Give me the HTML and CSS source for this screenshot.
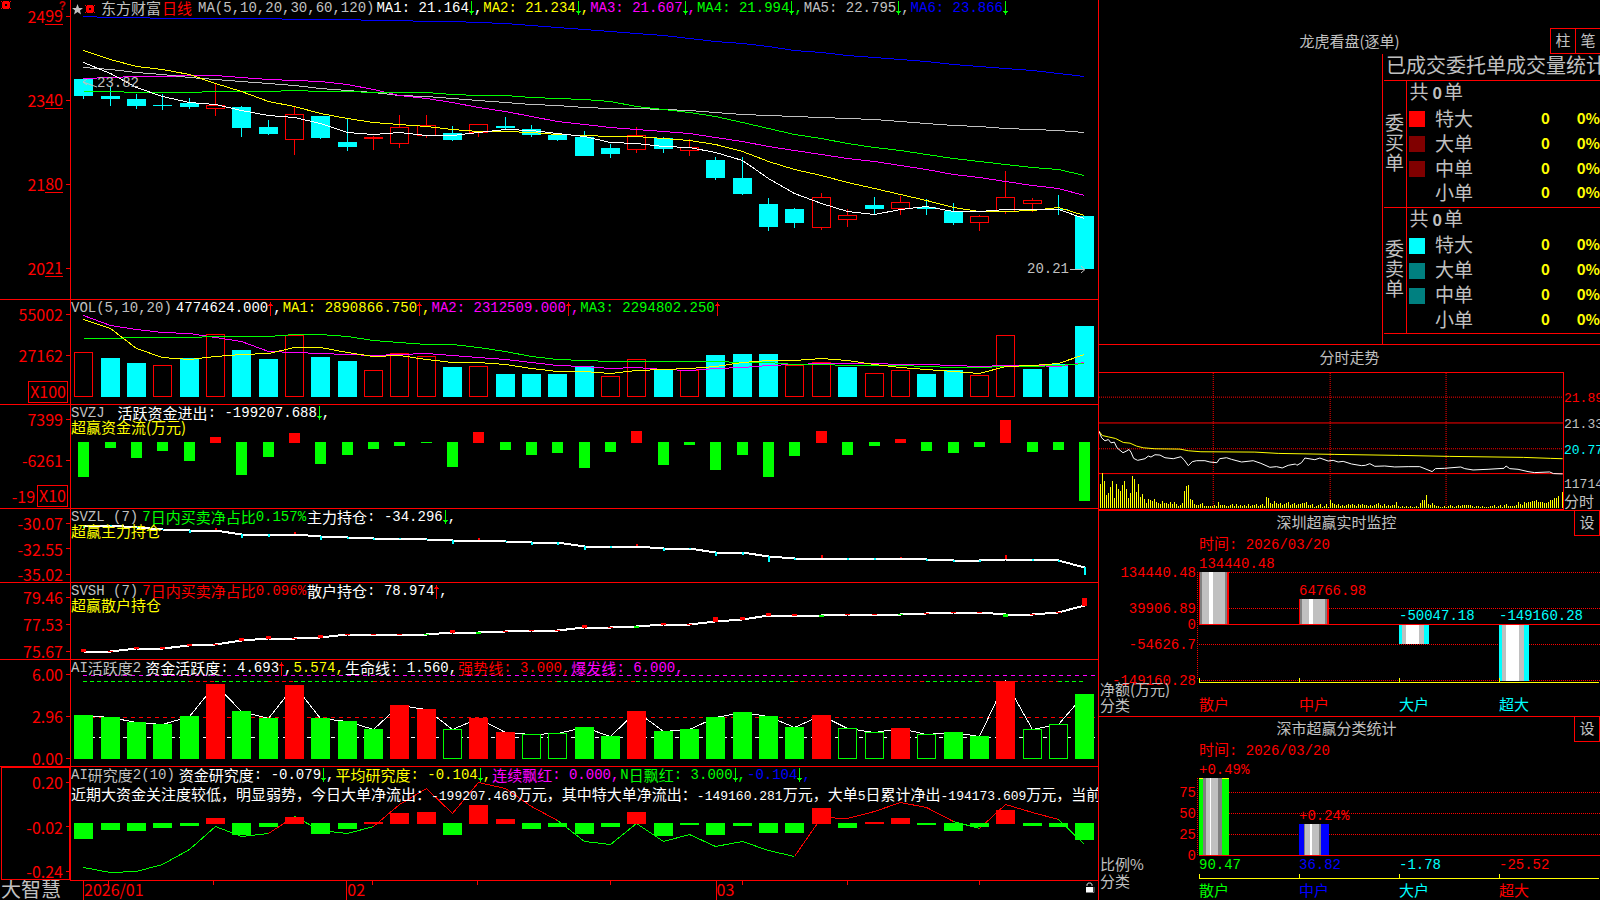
FILE: index.html
```html
<!DOCTYPE html>
<html lang="zh-CN">
<head>
<meta charset="utf-8">
<title>大智慧 - 东方财富</title>
<link rel="stylesheet" href="styles.css">
</head>
<body>
<svg class="defs" aria-hidden="true">
  <symbol id="down" viewBox="0 0 5 15"><path d="M2 0h1v14h-1zM0 10h5v1h-1v1h-1v2h-1v-2h-1v-1h-1z" fill="#0f0"/></symbol>
  <symbol id="up" viewBox="0 0 5 15"><path d="M2 1h1v14h-1zM2 1h1v2h1v1h1v1h-5v-1h1v-1h1z" fill="#f00"/></symbol>
  <symbol id="gear" viewBox="0 0 10 10"><path d="M2 1h6v1h1v6h-1v1h-6v-1h-1v-6h1zM4 4v2h2v-2zM0 1h1v1h-1zM9 1h1v1h-1zM0 8h1v1h-1zM9 8h1v1h-1z" fill="#f00" fill-rule="evenodd" shape-rendering="crispEdges"/></symbol>
</svg>
<main class="terminal">
<section class="left">

  <article class="panel">
    <div class="axis axis-main">
      <span>24<u>99</u></span><span>23<u>40</u></span><span>21<u>80</u></span><span>20<u>21</u></span>
      <div class="tools"><svg width="10" height="10"><use href="#gear"/></svg><em>?</em></div>
    </div>
    <div class="plot">
      <svg class="chart" id="kline" viewBox="71 0 1027 299" preserveAspectRatio="none"></svg>
      <header class="legend legend-main">
        <svg width="11" height="12" viewBox="0 0 11 12"><path d="M5.500 1l1.500 4h4l-3 2.500 1 4-3.500-2.500-3.500 2.500 1-4-3-2.500h4z" fill="silver"/></svg>
        <svg width="10" height="10"><use href="#gear"/></svg>
        <h1 class="c">东方财富</h1><span class="c red">日线</span>
        <span class="silver ma">MA(5,10,20,30,60,120)</span>
        <span class="white">MA1: 21.164<svg class="ar"><use href="#down"/></svg>,</span>
        <span class="yellow">MA2: 21.234<svg class="ar"><use href="#down"/></svg>,</span>
        <span class="magenta">MA3: 21.607<svg class="ar"><use href="#down"/></svg>,</span>
        <span class="green">MA4: 21.994<svg class="ar"><use href="#down"/></svg>,</span>
        <span class="silver">MA5: 22.795<svg class="ar"><use href="#down"/></svg>,</span>
        <span class="blue">MA6: 23.866<svg class="ar"><use href="#down"/></svg></span>
      </header>
      <span class="callout high"><svg width="14" height="10" viewBox="0 0 14 10"><path d="M4 0L0 3l4 3M0 3l14 5" fill="none" stroke="silver"/></svg>23.82</span>
      <span class="callout low">20.21<svg width="16" height="9" viewBox="0 0 16 9"><path d="M0 4.500h14M11 1l4 3.500-4 3.500" fill="none" stroke="silver"/></svg></span>
    </div>
  </article>

  <article class="panel">
    <div class="axis axis-boxed"><span>55002</span><span>27162</span><div class="pair"><b>X100</b></div></div>
    <div class="plot">
      <svg class="chart" id="vol" viewBox="71 300 1027 104" preserveAspectRatio="none"></svg>
      <header class="legend">
        <h2>VOL(5,10,20)</h2>
        <span class="white">4774624.000<svg class="ar"><use href="#up"/></svg>,</span>
        <span class="yellow">MA1: 2890866.750<svg class="ar"><use href="#up"/></svg>,</span>
        <span class="magenta">MA2: 2312509.000<svg class="ar"><use href="#up"/></svg>,</span>
        <span class="green">MA3: 2294802.250<svg class="ar"><use href="#up"/></svg></span>
      </header>
    </div>
  </article>

  <article class="panel">
    <div class="axis axis-boxed"><span>7399</span><span>-6261</span><div class="pair"><i>-19</i><b>X10</b></div></div>
    <div class="plot">
      <svg class="chart" id="flow" viewBox="71 405 1027 103" preserveAspectRatio="none"></svg>
      <header class="legend">
        <h2 class="wide">SVZJ</h2>
        <span class="white"><span class="c">活跃资金进出</span>: -199207.688<svg class="ar"><use href="#down"/></svg>,</span>
      </header>
      <p class="sub yellow c">超赢资金流(万元)</p>
    </div>
  </article>

  <article class="panel">
    <div class="axis"><span>-30.07</span><span>-32.55</span><span>-35.02</span></div>
    <div class="plot">
      <svg class="chart" id="zl" viewBox="71 509 1027 73" preserveAspectRatio="none"></svg>
      <header class="legend">
        <h2>SVZL (7)</h2>
        <span class="green">7<span class="c">日内买卖净占比</span>0.157%</span>
        <span class="white"><span class="c">主力持仓</span>: -34.296<svg class="ar"><use href="#down"/></svg>,</span>
      </header>
      <p class="sub yellow c">超赢主力持仓</p>
    </div>
  </article>

  <article class="panel">
    <div class="axis"><span>79.46</span><span>77.53</span><span>75.67</span></div>
    <div class="plot">
      <svg class="chart" id="sh" viewBox="71 583 1027 76" preserveAspectRatio="none"></svg>
      <header class="legend">
        <h2>SVSH (7)</h2>
        <span class="red">7<span class="c">日内买卖净占比</span>0.096%</span>
        <span class="white"><span class="c">散户持仓</span>: 78.974<svg class="ar"><use href="#up"/></svg>,</span>
      </header>
      <p class="sub yellow c">超赢散户持仓</p>
    </div>
  </article>

  <article class="panel">
    <div class="axis"><span>6.00</span><span>2.96</span><span>0.00</span></div>
    <div class="plot">
      <svg class="chart" id="active" viewBox="71 660 1027 106" preserveAspectRatio="none"></svg>
      <header class="legend">
        <h2>AI<span class="c">活跃度</span>2</h2>
        <span class="white"><span class="c">资金活跃度</span>: 4.693<svg class="ar"><use href="#up"/></svg>,</span>
        <span class="yellow">5.574,</span>
        <span class="white"><span class="c">生命线</span>: 1.560,</span>
        <span class="red"><span class="c">强势线</span>: 3.000,</span>
        <span class="magenta"><span class="c">爆发线</span>: 6.000,</span>
      </header>
    </div>
  </article>

  <article class="panel">
    <div class="axis selected"><span>0.20</span><span>-0.02</span><span>-0.24</span></div>
    <div class="plot">
      <svg class="chart" id="research" viewBox="71 767 1027 113" preserveAspectRatio="none"></svg>
      <header class="legend">
        <h2>AI<span class="c">研究度</span>2(10)</h2>
        <span class="white"><span class="c">资金研究度</span>: -0.079<svg class="ar"><use href="#down"/></svg>,</span>
        <span class="yellow"><span class="c">平均研究度</span>: -0.104<svg class="ar"><use href="#down"/></svg>,</span>
        <span class="magenta"><span class="c">连续飘红</span>: 0.000,</span>
        <span class="green">N<span class="c">日飘红</span>: 3.000<svg class="ar"><use href="#down"/></svg>,</span>
        <span class="blue">-0.104<svg class="ar"><use href="#down"/></svg>,</span>
      </header>
      <p class="comment white"><span class="c">近期大资金关注度较低，明显弱势，今日大单净流出：</span>-199207.469<span class="c">万元，其中特大单净流出：</span>-149160.281<span class="c">万元，大单</span>5<span class="c">日累计净出</span>-194173.609<span class="c">万元，当前</span></p>
    </div>
  </article>

  <footer class="timeline">
    <strong>大智慧</strong>
    <div class="plot">
      <svg class="chart" id="ticks" viewBox="71 881 1027 19" preserveAspectRatio="none"></svg>
      <ol><li>2026/01</li><li>02</li><li>03</li></ol>
      <svg class="lock" width="10" height="11" viewBox="0 0 10 11"><path d="M2 4V2h1V1h3v1h1v2" fill="none" stroke="silver"/><path d="M1 5h7v5h-7z" fill="#fff"/><path d="M9 5v5.500h-8" fill="none" stroke="gray"/></svg>
    </div>
  </footer>
</section>

<section class="right">
  <article class="card orders">
    <header class="orders-head"><h2 class="c">龙虎看盘(逐单)</h2><div class="btns"><button type="button">柱</button><button type="button">笔</button></div></header>
    <div class="orders-body">
      <h3>已成交委托单成交量统计</h3>
      <table>
        <colgroup><col class="c-side"><col class="c-sw"><col class="c-lb"><col><col class="c-pct"></colgroup>
        <tbody>
          <tr><th rowspan="5" class="side">委买单</th><td colspan="4">共<b>0</b>单</td></tr>
          <tr><td class="sw"><i class="s-red"></i></td><td>特大</td><td class="n">0</td><td class="n">0%</td></tr>
          <tr><td class="sw"><i class="s-maroon"></i></td><td>大单</td><td class="n">0</td><td class="n">0%</td></tr>
          <tr><td class="sw"><i class="s-maroon"></i></td><td>中单</td><td class="n">0</td><td class="n">0%</td></tr>
          <tr><td class="sw"></td><td>小单</td><td class="n">0</td><td class="n">0%</td></tr>
        </tbody>
        <tbody>
          <tr><th rowspan="5" class="side">委卖单</th><td colspan="4">共<b>0</b>单</td></tr>
          <tr><td class="sw"><i class="s-cyan"></i></td><td>特大</td><td class="n">0</td><td class="n">0%</td></tr>
          <tr><td class="sw"><i class="s-teal"></i></td><td>大单</td><td class="n">0</td><td class="n">0%</td></tr>
          <tr><td class="sw"><i class="s-teal"></i></td><td>中单</td><td class="n">0</td><td class="n">0%</td></tr>
          <tr><td class="sw"></td><td>小单</td><td class="n">0</td><td class="n">0%</td></tr>
        </tbody>
      </table>
    </div>
  </article>

  <article class="card trend">
    <h2 class="c">分时走势</h2>
    <div class="trend-body">
      <svg id="trend" viewBox="12 99 1393 411" preserveAspectRatio="none"></svg>
      <div class="trend-axis">
        <span class="red">21.89</span><span class="silver">21.33</span><span class="cyan">20.77</span>
        <span class="silver tail">11714</span><span class="silver c">分时</span>
      </div>
    </div>
  </article>

  <article class="card">
    <header class="card-head"><h2 class="c">深圳超赢实时监控</h2><button type="button">设</button></header>
    <p class="time red"><span class="c">时间</span>: 2026/03/20</p>
    <svg class="bars" id="monitor" viewBox="1099 552 501 164" preserveAspectRatio="xMinYMin meet"></svg>
  </article>

  <article class="card">
    <header class="card-head"><h2 class="c">深市超赢分类统计</h2><button type="button">设</button></header>
    <p class="time red"><span class="c">时间</span>: 2026/03/20</p>
    <svg class="bars" id="stats" viewBox="1099 758 501 142" preserveAspectRatio="xMinYMin meet"></svg>
  </article>
</section>
</main>
<script src="charts.js"></script>
</body>
</html>
```

FILE: styles.css
```css
* { box-sizing: border-box; }
html, body { height: 100%; }
body {
  margin: 0;
  background: #000;
  color: silver;
  font: 14px/15px "Liberation Mono", "Noto Sans CJK SC", monospace;
  overflow: hidden;
}
h1, h2, h3, p, ol { margin: 0; padding: 0; font-weight: normal; font-size: 14px; }
svg { display: block; }
.defs { position: absolute; width: 0; height: 0; }
.c { font: 15px/15px "Noto Sans CJK SC", sans-serif; }
.red { color: #f00; }
.white { color: #fff; }
.yellow { color: #ff0; }
.magenta { color: #f0f; }
.green { color: #0f0; }
.silver { color: silver; }
.blue { color: #00f; }
.cyan { color: #0ff; }

.terminal {
  display: grid;
  grid-template-columns: 1098fr 502fr;
  grid-template-rows: minmax(0, 1fr);
  height: 100vh;
}
.left {
  display: grid;
  grid-template-rows:
    minmax(0, 299fr) minmax(0, 105fr) minmax(0, 104fr) minmax(0, 74fr)
    minmax(0, 77fr) minmax(0, 107fr) minmax(0, 114fr) minmax(0, 20fr);
  min-width: 0;
  min-height: 0;
}
.panel { display: grid; grid-template-columns: 70px 1fr; grid-template-rows: minmax(0, 1fr); }
.panel + .panel { border-top: 1px solid #f00; }
.plot { position: relative; border-left: 1px solid #f00; min-width: 0; overflow: hidden; }
.chart { position: absolute; inset: 0; width: 100%; height: 100%; }

/* value scales */
.axis {
  position: relative;
  display: flex;
  flex-direction: column;
  justify-content: space-between;
  padding-top: 6px;
  color: #f00;
  font: 16px/16px "Noto Sans CJK SC", sans-serif;
  min-height: 0;
}
.axis > span { display: flex; justify-content: flex-end; align-items: center; height: 16px; }
.axis > span::after { content: ""; width: 4px; height: 1px; margin-left: 3px; background: #f00; }
.axis u { text-decoration: none; border-bottom: 1px solid #f00; height: 18px; }
.axis b { border: 1px solid #f00; font-weight: normal; line-height: 19px; height: 22px; padding: 0 1px; margin-right: 2px; }
.axis i { font-style: normal; }
.axis-main { padding: 8px 0 23px; }
.axis-boxed { justify-content: flex-start; padding-bottom: 1px; }
.axis-boxed > span + span { margin-top: 25px; }
.pair { display: flex; justify-content: flex-end; align-items: center; gap: 2px; height: 22px; margin-top: auto; }
.selected { border: 1px solid #f00; margin-left: 1px; }
.selected > span { margin-right: -1px; }
.tools { position: absolute; top: 0; left: 1px; right: 4px; display: flex; justify-content: space-between; }
.tools em { color: #c00; font: 700 12px/14px "Liberation Mono", monospace; }

/* indicator readouts */
.legend { position: relative; display: flex; align-items: center; gap: 1px; padding-top: 2px; height: 15px; white-space: nowrap; }
.legend > span { display: flex; align-items: center; white-space: pre; }
.legend h2 { display: flex; align-items: center; margin-right: 3px; white-space: pre; }
.legend .c { padding-bottom: 3px; }
.legend h2.wide { margin-right: 12px; }
.legend-main { padding-left: 1px; height: 16px; padding-top: 1px; }
.legend-main > svg { margin-right: 1px; }
.legend-main h1 { margin-left: 4px; }
.legend-main .ma { margin-left: 5px; margin-right: 1px; }
.ar { width: 5px; height: 15px; }
.sub { position: relative; line-height: 13px; }
.comment { position: relative; padding-top: 4px; white-space: nowrap; font-size: 13px; }
.callout { position: absolute; display: flex; align-items: center; }
.high { left: 12px; top: 76px; }
.low { right: 12px; bottom: 22px; gap: 1px; }

.timeline { display: grid; grid-template-columns: 70px 1fr; grid-template-rows: minmax(0, 1fr); }
.timeline strong { padding-left: 1px; font: 20px/17px "Noto Sans CJK SC", sans-serif; }
.timeline .plot { border-top: 1px solid #f00; border-left: 0; }
.timeline ol {
  position: relative;
  display: grid;
  grid-template-columns: 263fr 369fr 382fr;
  padding-left: 13px;
  height: 100%;
  list-style: none;
  color: #f00;
  font: 16px/17px "Noto Sans CJK SC", sans-serif;
}
.timeline li { border-left: 1px solid #f00; }
.lock { position: absolute; right: 3px; top: 1px; }

/* right column */
.right {
  display: grid;
  grid-template-rows: minmax(0, 344fr) minmax(0, 166fr) minmax(0, 206fr) minmax(0, 184fr);
  border-left: 1px solid #f00;
  min-width: 0;
  min-height: 0;
}
.card { display: flex; flex-direction: column; min-width: 0; overflow: hidden; }
.card + .card { border-top: 1px solid #f00; }
button {
  width: 26px;
  height: 26px;
  padding: 0 0 3px;
  border: 1px solid #f00;
  background: #000;
  color: silver;
  font: 15px/15px "Noto Sans CJK SC", sans-serif;
}
.orders-head { display: grid; grid-template-columns: 1fr auto 1fr; align-items: center; padding-top: 28px; }
.orders-head h2 { grid-column: 2; padding-bottom: 2px; }
.btns { display: flex; justify-self: end; }
.btns button + button { border-left: 0; border-right: 0; width: 24px; }
.orders-body { flex: 1; align-self: flex-end; width: 218px; padding-left: 1px; border-left: 1px solid #f00; }
.orders-body h3 {
  padding-left: 2px;
  height: 26px;
  overflow: hidden;
  white-space: nowrap;
  font: 20px/22px "Noto Sans CJK SC", sans-serif;
}
table { width: 100%; border-collapse: collapse; table-layout: fixed; font: 19px/19px "Noto Sans CJK SC", sans-serif; }
.c-side { width: 22px; }
.c-sw { width: 29px; }
.c-lb { width: 60px; }
.c-pct { width: 50px; }
tbody { border-top: 1px solid #f00; border-bottom: 1px solid #f00; }
td, th { padding: 0 0 5px; font-weight: normal; text-align: left; height: 25px; }
td[colspan] { padding-left: 3px; }
td b { margin: 0 2px 0 4px; font: 700 16px/19px "Noto Sans CJK SC", sans-serif; }
.side { padding: 0 1px 4px; border-right: 1px solid #f00; line-height: 20px; }
td.sw { padding: 0 0 1px 2px; }
.sw i { display: block; width: 16px; height: 16px; }
td.n { color: #ff0; font: 700 15px/19px "Noto Sans CJK SC", sans-serif; text-align: right; }
.s-red { background: #f00; }
.s-maroon { background: maroon; }
.s-cyan { background: #0ff; }
.s-teal { background: teal; }

.trend h2 { text-align: center; padding: 4px 0 8px; }
.trend-body { flex: 1; display: grid; grid-template-columns: 1fr 36px; grid-template-rows: minmax(0, 1fr); min-height: 0; }
.trend-body > svg { width: 100%; height: 100%; border: 1px solid #f00; border-left: 0; }
.trend-axis { display: flex; flex-direction: column; gap: 11px; padding-top: 19px; overflow: hidden; font-size: 13px; white-space: nowrap; }
.trend-axis .tail { margin: 8px 0 -10px; }
.card-head { display: flex; }
.card-head h2 { flex: 1; text-align: center; padding-top: 3px; }
.card-head button { border-top: 0; height: 25px; }
.time { padding-left: 100px; height: 16px; }
.time .c { line-height: 13px; }
.bars { flex: 1; width: 100%; min-height: 0; }
.bars text { font: 14px "Liberation Mono", monospace; dominant-baseline: central; }
.bars text.c { font: 15px "Noto Sans CJK SC", sans-serif; }
```

FILE: charts.js
```js
const RED = '#f00', GREEN = '#0f0', CYAN = '#0ff', YELLOW = '#ff0', WHITE = '#fff',
      MAGENTA = '#f0f', SILVER = '#c0c0c0', GRAY = '#808080', BLUE = '#00f';
const x = i => Math.round(83.3 + 26.34 * i);
const out = {};
const put = (id, s) => { out[id] = (out[id] || '') + s; };

const rect = (l, t, w, h, fill) =>
  `<rect x="${l}" y="${t}" width="${w}" height="${h}" fill="${fill}" shape-rendering="crispEdges"/>`;
const box = (l, t, w, h, stroke) =>
  `<rect x="${l + .5}" y="${t + .5}" width="${w - 1}" height="${h - 1}" fill="none" stroke="${stroke}" shape-rendering="crispEdges"/>`;
const poly = (pts, stroke, width = 1, dash = '') =>
  `<polyline points="${pts.map(p => p.join()).join(' ')}" fill="none" stroke="${stroke}" stroke-width="${width}" stroke-dasharray="${dash}" vector-effect="non-scaling-stroke" shape-rendering="crispEdges"/>`;
const series = (ys, stroke, width) => poly(ys.map((y, i) => [x(i) + .5, y + .5]), stroke, width);
const text = (l, y, s, fill, anchor = 'start', cls = '') =>
  `<text x="${l}" y="${y}" fill="${fill}" text-anchor="${anchor}" class="${cls}">${s}</text>`;

/* candles: direction, high, body top, body bottom, low */
const candles = `c79,79,96,99 c87,96,99,106 c94,99,106,109 c94,105,106,110 c98,103,107,109 r83,105,109,116
c106,107,128,137 c120,127,134,135 r106,114,140,155 c116,116,138,139 c118,142,147,151 r136,137,139,150
r115,127,144,148 r115,125,136,138 c126,133,140,141 r124,124,133,137 c117,126,128,129 c125,129,135,137
c134,135,140,141 c131,137,156,156 c144,148,154,158 r127,135,150,153 c137,138,149,153 r139,147,151,156
c157,160,178,180 c157,178,194,195 c198,204,227,231 c208,209,223,228 r193,197,228,230 r209,215,220,227
c197,205,209,214 r196,202,209,215 c199,207,209,215 c203,211,223,225 r215,216,223,231 r171,197,212,214
r198,200,204,212 c195,209,210,215 c216,216,269,269`.split(/\s+/);
candles.forEach((k, i) => {
  const [h, t, b, l] = k.slice(1).split(',').map(Number), cx = x(i);
  if (k[0] === 'c') put('kline', rect(cx, h, 1, l - h, CYAN) + rect(cx - 9, t, 19, b - t, CYAN));
  else put('kline', rect(cx, h, 1, t - h, RED) + rect(cx, b, 1, l - b, RED) + box(cx - 9, t, 19, b - t, RED));
});
put('kline', series([16,17,17,18,18,18,18,18,19,19,19,20,20,21,21,22,23,25,27,29,31,33,35,38,41,43,46,50,52,55,57,59,61,64,66,68,70,73,76], BLUE));
put('kline', series([67,69,72,74,77,79,81,83,85,88,90,92,95,96,98,100,102,104,105,107,108,108,109,110,112,114,115,116,117,118,119,121,123,125,126,128,129,130,132], SILVER));
put('kline', series([78,77,76,76,75,75,77,79,80,81,84,89,95,98,102,107,111,116,121,124,127,129,131,133,137,141,146,150,154,158,161,165,169,174,177,181,185,188,195], MAGENTA));
put('kline', series([91,91,92,92,92,91,91,91,90,91,91,92,92,92,94,95,95,97,98,99,101,106,109,112,116,122,128,134,138,143,147,150,154,158,161,164,167,169,175], GREEN));
put('kline', series([50,59,66,69,74,83,91,101,106,113,118,122,124,126,129,131,131,132,134,135,136,136,138,140,144,151,161,169,175,182,188,194,200,207,211,211,210,207,215], YELLOW));
put('kline', series([62,73,87,96,102,104,110,115,117,123,132,134,132,135,135,132,129,130,133,136,142,143,146,147,152,160,178,193,203,211,214,209,206,211,211,209,209,209,218], WHITE));

/* volume */
'r352 c358 c363 r365 c358 r334 c350 c359 r335 c357 c361 r370 r353 r356 c367 r366 c374 c374 c374 c366 r376 r359 c369 r370 c355 c354 c354 r365 r362 c367 r373 r370 c374 c370 r375 r335 c369 c364 c326'
  .split(' ').forEach((v, i) => {
    const t = +v.slice(1);
    put('vol', v[0] === 'c' ? rect(x(i) - 9, t, 19, 397 - t, CYAN) : box(x(i) - 9, t, 19, 397 - t, RED));
  });
put('vol', series([315,325,329,332,333,337,341,351,352,353,354,355,354,353,355,357,359,362,365,366,368,367,369,370,368,367,365,364,363,363,363,364,364,365,366,365,365,366,362], MAGENTA));
put('vol', series([338,338,337,337,337,336,336,336,334,334,336,340,342,344,344,347,351,356,359,360,361,361,361,361,361,362,362,364,364,365,365,365,366,367,367,366,366,365,363], GREEN));
put('vol', series([319,328,348,357,359,356,354,353,347,347,352,356,355,359,362,362,364,368,371,371,373,370,369,368,366,362,360,360,358,360,364,367,369,371,373,366,365,363,354], YELLOW));

/* bars hanging from or standing on a base line */
const signed = (id, ends, base, w) => ends.forEach((e, i) => {
  const l = x(i) - (w - 1) / 2;
  put(id, e < base ? rect(l, e, w, base + 1 - e, RED) : rect(l, base, w, e - base, GREEN));
});
signed('flow', [477,448,458,451,461,437,475,457,433,464,455,449,446,443,467,432,450,455,453,468,452,431,465,445,470,455,477,456,431,455,446,439,451,453,447,420,452,450,501], 442, 11);

/* holdings */
const zl = [525,525,527,529,530,530,534,534,534,536,537,538,538,539,540,540,541,542,542,546,546,546,548,548,552,552,556,558,558,558,558,558,559,560,560,559,559,560,567];
const zlTick = [3,1,1,1,3,-2,4,3,-2,4,2,2,1,1,4,-2,1,3,3,4,2,-2,3,1,4,3,6,2,-3,2,2,-1,2,2,2,-4,2,2,8];
put('zl', series(zl, WHITE, 2));
zlTick.forEach((d, i) => put('zl', d > 0 ? rect(x(i), zl[i], 2, d, CYAN) : rect(x(i), zl[i] + d, 2, -d, RED)));
const sh = [651,651,648,648,645,644,640,638,638,637,634,634,634,634,632,632,631,630,630,627,627,626,624,624,621,619,615,615,615,614,614,614,613,612,612,614,614,612,605];
const shTick = [3,1,2,2,2,1,3,3,1,3,1,1,1,-1,3,-2,1,1,1,3,1,-2,2,1,5,3,3,2,-2,1,1,-1,1,1,1,-3,1,1,8];
put('sh', series(sh, WHITE, 2));
shTick.forEach((d, i) => put('sh', d > 0 ? rect(x(i) - 2, sh[i] + 1 - d, 5, d, RED) : rect(x(i) - 2, sh[i], 5, -d, GREEN)));

/* activity */
const act = 'g715 g717 g722 g724 g716 r684 g711 g718 r685 g718 g721 g729 r705 r709 h729 r718 r732 h734 h733 g727 g736 r711 g731 g729 g717 g712 g716 g727 r715 h728 h732 r728 h734 g732 g736 r681 h729 h724 g694'.split(' ');
put('active', poly([[83, 737.5], [1098, 737.5]], WHITE, 1, '4 4') + poly([[83, 717.5], [1098, 717.5]], RED, 1, '4 4') + poly([[83, 675.5], [1098, 675.5]], MAGENTA, 1, '4 4'));
[[0,4,GREEN],[4,5,RED],[5,7,GREEN],[7,8,RED],[8,11,GREEN],[11,18,RED],[18,20,GREEN],[20,21,RED],[21,27,GREEN],[27,32,RED],[32,34,GREEN],[34,37,RED],[37,38,GREEN]]
  .forEach(([a, b, c]) => put('active', poly([[x(a), 681.5], [x(b), 681.5]], c, 1, '4 3')));
put('active', series(act.map(v => +v.slice(1)), WHITE));
act.forEach((v, i) => {
  const t = +v.slice(1), l = x(i) - 9;
  put('active', v[0] === 'h' ? rect(l, t, 19, 759 - t, '#000') + box(l, t, 19, 759 - t, GREEN) : rect(l, t, 19, 759 - t, v[0] === 'r' ? RED : GREEN));
});

/* research */
const res = [867,872,871,864,849,826,836,833,816,830,833,826,804,788,813,782,788,806,820,841,844,823,841,834,846,841,850,856,817,818,811,802,807,821,828,804,812,819,844];
[[0,7,GREEN],[7,8,RED],[8,11,GREEN],[11,18,RED],[18,27,GREEN],[27,33,RED],[33,34,GREEN],[34,37,RED],[37,38,GREEN]]
  .forEach(([a, b, c]) => put('research', poly(res.slice(a, b + 1).map((y, j) => [x(a + j) + .5, y + .5]), c)));
signed('research', [839,830,831,828,826,818,835,827,817,834,829,822,813,812,835,805,819,829,827,834,827,812,836,825,835,826,833,833,808,828,822,818,825,831,827,810,826,827,840], 823, 19);

[109, 214, 373, 478, 610, 742, 847, 979].forEach(t => put('ticks', rect(t, 881, 1, 4, RED)));

/* intraday trend, drawn on a grid of three units to a pixel */
const pairs = s => s.split(' ').map(p => p.split(',').map(Number));
[[172, '1 1'], [250, ''], [328, '1 1'], [403, '']].forEach(([y, d]) => put('trend', poly([[12, y], [1405, y]], RED, 1, d)));
[355, 706, 1054].forEach(v => put('trend', poly([[v, 99], [v, 510]], RED, 1, '1 1')));
const vols = [24,35,27,13,15,21,27,10,24,19,17,23,27,19,10,15,32,29,16,24,11,14,9,5,9,8,7,9,6,5,4,7,5,5,4,6,4,6,4,2,3,5,17,22,23,9,8,4,3,3,4,5,2,2,2,2,2,3,2,6,3,3,3,2,2,3,4,2,4,2,3,2,3,2,4,2,3,3,4,2,3,4,2,11,10,5,4,7,5,4,5,3,4,5,6,3,4,5,3,4,4,5,5,6,3,3,4,1,2,3,4,1,2,4,1,8,5,4,3,4,2,3,2,3,4,3,4,3,2,4,3,4,3,3,2,3,2,3,4,5,3,2,4,2,3,2,3,3,6,2,1,2,1,2,1,2,1,1,2,1,5,8,8,13,4,3,5,3,2,2,1,1,2,1,2,3,2,1,2,3,2,3,3,3,3,3,2,1,2,2,1,2,1,1,1,2,2,3,1,2,3,1,3,4,2,2,2,2,3,6,4,3,6,5,6,6,7,7,8,6,6,6,5,5,6,8,8,10,10,12];
vols.forEach((h, i) => put('trend', rect(15 + i * 6, 507 - h * 3, 3, h * 3, YELLOW)));
put('trend', rect(1402, 459, 3, 48, YELLOW));
put('trend', poly(pairs('12,275 22,288 40,292 62,297 85,309 105,311 125,320 145,325 180,328 255,329 280,334 318,337 480,338 550,342 720,345 912,348 1065,351 1286,354 1368,357 1404,358'), YELLOW));
put('trend', poly(pairs('12,275 20,295 30,304 40,300 48,310 58,308 66,325 84,340 96,334 102,330 108,338 116,357 128,363 150,358 160,350 168,353 180,346 195,347 210,355 235,358 258,352 268,362 280,379 292,367 305,364 330,364 345,368 366,370 374,358 395,355 410,360 440,368 475,364 498,372 525,384 545,382 562,386 580,378 602,374 606,378 620,370 630,356 660,361 675,356 700,365 715,363 730,368 745,366 770,374 800,379 812,378 825,373 840,381 870,380 900,383 940,382 975,382 1012,397 1022,388 1050,387 1098,383 1110,388 1135,392 1180,390 1228,387 1234,380 1245,388 1270,390 1300,397 1320,400 1365,398 1376,403 1404,404'), WHITE));

/* cylinder bars: successive stripe widths and colours */
const cylinder = (id, l, t, h, stripes) => stripes.forEach(([w, c]) => { put(id, rect(l, t, w, h, c)); l += w; });
const dots = (id, y) => put(id, poly([[1199, y + .5], [1600, y + .5]], RED, 1, '1 1'));
const baseAxis = (id, y) => {
  put(id, rect(1199, y, 400, 1, YELLOW));
  [1199, 1299, 1399, 1499].forEach(v => put(id, rect(v, y - 4, 1, 4, YELLOW)));
};

[572, 608, 644, 680].forEach(y => dots('monitor', y));
put('monitor', poly([[1197.5, 572], [1197.5, 680]], RED, 1, '1 1'));
put('monitor', rect(1199, 624, 401, 1, RED));
const warm = [[1, RED], [2, GRAY], [7, SILVER], [4, WHITE], [12, SILVER], [2, GRAY], [2, RED]];
const cold = [[3, CYAN], [4, SILVER], [13, WHITE], [5, SILVER], [5, CYAN]];
cylinder('monitor', 1199, 572, 52, warm);
cylinder('monitor', 1299, 599, 25, warm);
cylinder('monitor', 1399, 625, 19, cold);
cylinder('monitor', 1499, 625, 56, cold);
baseAxis('monitor', 682);
[[573, '134440.48'], [609, '39906.89'], [625, '0'], [645, '-54626.7'], [681, '-149160.28']].forEach(([y, s]) => put('monitor', text(1196, y, s, RED, 'end')));
put('monitor', text(1199, 564, '134440.48', RED) + text(1299, 591, '64766.98', RED) + text(1399, 616, '-50047.18', CYAN) + text(1499, 616, '-149160.28', CYAN));
put('monitor', text(1100, 688, '净额(万元)', SILVER, 'start', 'c') + text(1100, 704, '分类', SILVER, 'start', 'c'));

[792, 813, 834].forEach(y => dots('stats', y));
put('stats', poly([[1197.5, 778], [1197.5, 855]], RED, 1, '1 1'));
cylinder('stats', 1199, 778, 77, [[4, GREEN], [3, GRAY], [4, SILVER], [1, WHITE], [7, SILVER], [4, GRAY], [7, GREEN]]);
put('stats', rect(1199, 778, 4, 1, YELLOW) + rect(1222, 778, 7, 1, YELLOW));
cylinder('stats', 1299, 824, 31, [[5, BLUE], [1, GRAY], [5, SILVER], [2, WHITE], [7, SILVER], [2, GRAY], [8, BLUE]]);
put('stats', rect(1199, 855, 401, 1, RED));
baseAxis('stats', 878);
[[793, '75'], [814, '50'], [835, '25'], [856, '0']].forEach(([y, s]) => put('stats', text(1196, y, s, RED, 'end')));
put('stats', text(1199, 770, '+0.49%', RED) + text(1299, 816, '+0.24%', RED));
put('stats', text(1199, 865, '90.47', GREEN) + text(1299, 865, '36.82', BLUE) + text(1399, 865, '-1.78', CYAN) + text(1499, 865, '-25.52', RED));
put('stats', text(1100, 863, '比例%', SILVER, 'start', 'c') + text(1100, 880, '分类', SILVER, 'start', 'c'));

[['monitor', 703, [RED, RED, CYAN, CYAN]], ['stats', 889, [GREEN, BLUE, CYAN, RED]]].forEach(([id, y, cs]) =>
  ['散户', '中户', '大户', '超大'].forEach((s, i) => put(id, text(1199 + i * 100, y, s, cs[i], 'start', 'c'))));

for (const id in out) document.getElementById(id).innerHTML = out[id];
```
